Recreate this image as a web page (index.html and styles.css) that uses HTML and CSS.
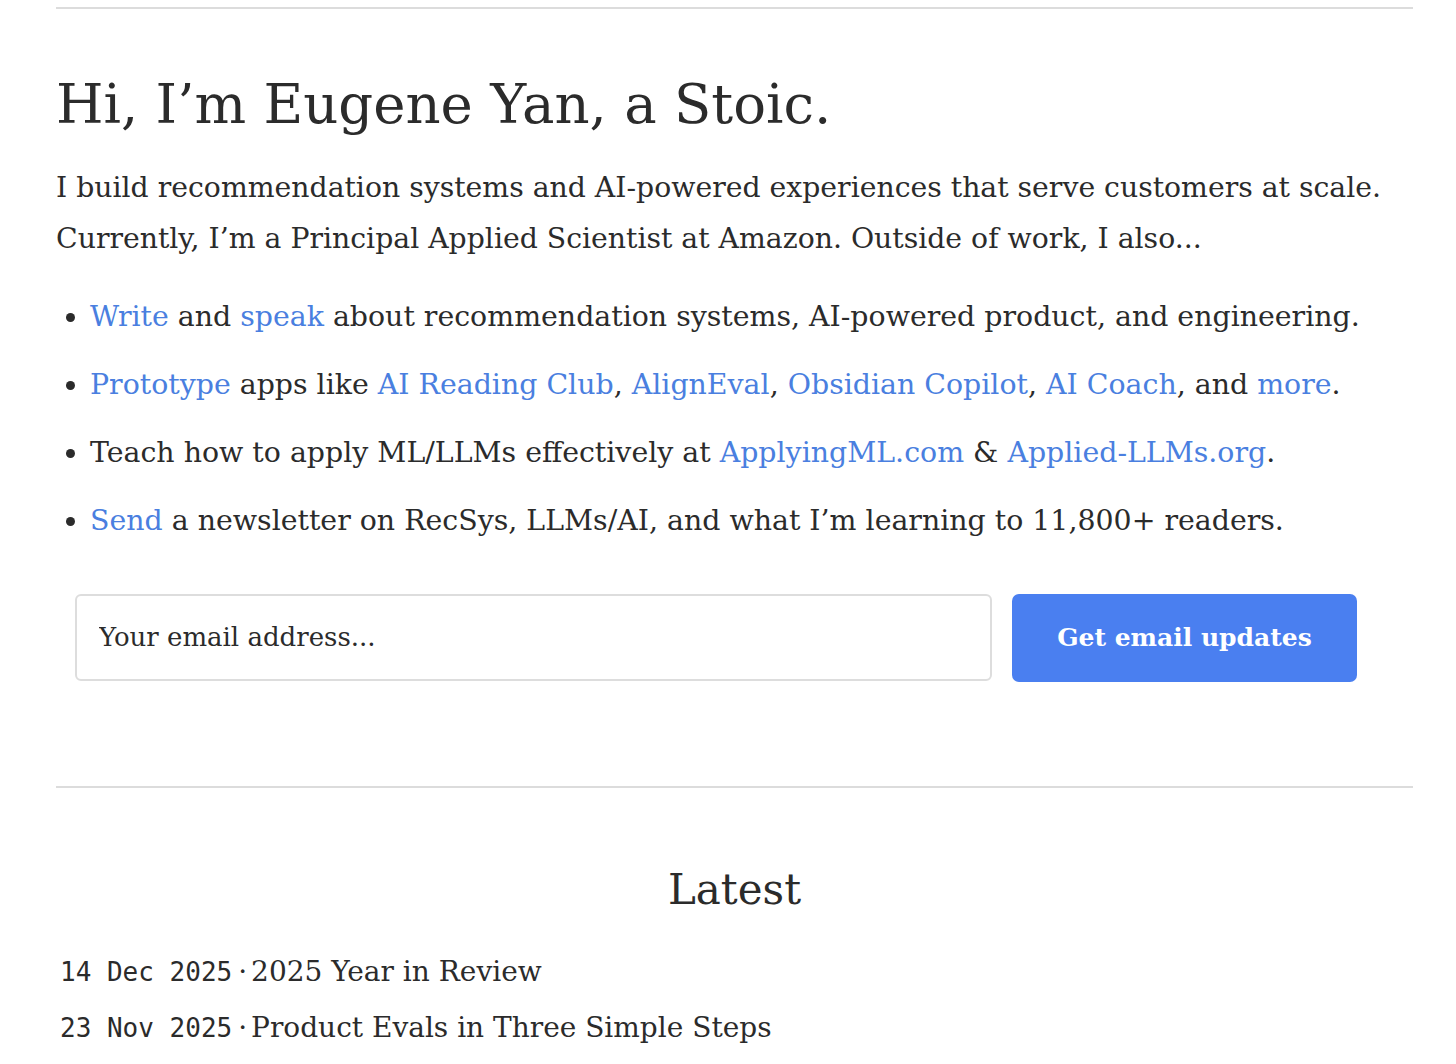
FILE: index.html
```html
<!DOCTYPE html>
<html lang="en">
<head>
  <meta charset="UTF-8">
  <title>Eugene Yan</title>
  <link rel="stylesheet" href="styles.css">
</head>
<body>

<main class="page">
  <hr class="rule rule-top">

  <section class="intro">
    <h1>Hi, I’m Eugene Yan, a Stoic.</h1>
    <p>I build recommendation systems and AI-powered experiences that serve customers at scale. Currently, I’m a Principal Applied Scientist at Amazon. Outside of work, I also...</p>

    <ul class="doings">
      <li><a href="#">Write</a> and <a href="#">speak</a> about recommendation systems, AI-powered product, and engineering.</li>
      <li><a href="#">Prototype</a> apps like <a href="#">AI Reading Club</a>, <a href="#">AlignEval</a>, <a href="#">Obsidian Copilot</a>, <a href="#">AI Coach</a>, and <a href="#">more</a>.</li>
      <li>Teach how to apply ML/LLMs effectively at <a href="#">ApplyingML.com</a> &amp; <a href="#">Applied-LLMs.org</a>.</li>
      <li><a href="#">Send</a> a newsletter on RecSys, LLMs/AI, and what I’m learning to 11,800+ readers.</li>
    </ul>

    <form class="subscribe" onsubmit="return false">
      <input type="email" placeholder="Your email address...">
      <button type="submit">Get email updates</button>
    </form>
  </section>

  <hr class="rule">

  <section class="latest">
    <h2>Latest</h2>
    <ul class="posts">
      <li><span class="date">14 Dec 2025</span><span class="dot">·</span><a href="#">2025 Year in Review</a></li>
      <li><span class="date">23 Nov 2025</span><span class="dot">·</span><a href="#">Product Evals in Three Simple Steps</a></li>
    </ul>
  </section>
</main>

</body>
</html>
```

FILE: styles.css
```css
body {
  margin: 0;
  background: #fff;
  color: #2b2b2b;
  font-family: "DejaVu Serif", "Liberation Serif", serif;
}
.page {
  padding: 0 43px 0 56px;
}
.rule {
  border: 0;
  border-top: 2px solid #dcdcdc;
  margin: 0;
}
.rule-top {
  margin-top: 7px;
}
a {
  color: #4a7fe0;
  text-decoration: none;
}

.intro {
  padding-bottom: 104px;
}
.intro h1 {
  font-size: 54.5px;
  font-weight: normal;
  margin: 66px 0 27px;
  line-height: 1.1;
}
.intro p {
  font-size: 28.3px;
  line-height: 51px;
  margin: 0 0 31px;
}
.doings {
  margin: 0;
  padding-left: 34px;
  font-size: 28.4px;
  line-height: 44px;
}
.doings li {
  margin-bottom: 24px;
}

.subscribe {
  display: flex;
  gap: 20px;
  margin: 51px 56px 0 19px;
}
.subscribe input {
  flex: 1;
  height: 87px;
  box-sizing: border-box;
  border: 2px solid #ddd;
  border-radius: 6px;
  padding: 0 22px;
  font-family: inherit;
  font-size: 26px;
  color: #2b2b2b;
}
.subscribe input::placeholder {
  color: #2b2b2b;
}
.subscribe button {
  width: 345px;
  height: 88px;
  border: 0;
  border-radius: 7px;
  background: #4a7ff0;
  color: #fff;
  font-family: inherit;
  font-size: 25px;
  font-weight: bold;
}

.latest h2 {
  text-align: center;
  font-size: 42px;
  font-weight: normal;
  margin: 77px 0 38px;
}
.posts {
  list-style: none;
  margin: 0;
  padding-left: 4px;
  font-size: 28px;
}
.posts li {
  margin-bottom: 16px;
  line-height: 40px;
}
.date {
  font-family: "DejaVu Sans Mono", monospace;
  font-size: 26px;
}
.dot {
  margin: 0 4px 0 6px;
}
.posts a {
  color: #2b2b2b;
}
```
